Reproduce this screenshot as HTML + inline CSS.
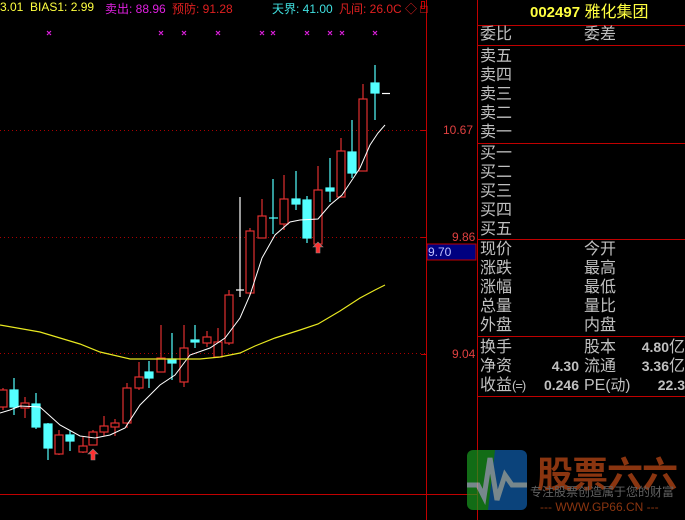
<!DOCTYPE html>
<html><head><meta charset="utf-8"><style>
body{margin:0;background:#000;width:685px;height:520px;overflow:hidden;position:relative;font-family:"Liberation Sans","Noto Sans CJK SC",sans-serif}
.t{position:absolute;white-space:nowrap;font-size:12px}
.p{position:absolute;color:#c0c0c0;font-size:16px;font-family:"Liberation Sans","WenQuanYi Zen Hei","Noto Sans CJK SC",sans-serif;line-height:19px;white-space:nowrap}
.v{position:absolute;color:#c0c0c0;font-size:14px;font-weight:bold;text-align:right;line-height:19px}
</style></head><body>
<svg width="685" height="520" style="position:absolute;left:0;top:0">
<g stroke="#a00" stroke-dasharray="1,3" stroke-width="1">
<line x1="0" y1="130.5" x2="426" y2="130.5"/><line x1="0" y1="237.5" x2="426" y2="237.5"/><line x1="0" y1="353.5" x2="426" y2="353.5"/></g>
<g stroke="#c00000" stroke-width="1" fill="none">
<line x1="426.5" y1="0" x2="426.5" y2="520"/><line x1="477.5" y1="0" x2="477.5" y2="520"/>
<line x1="0" y1="494.5" x2="426" y2="494.5"/>
<line x1="427" y1="494.5" x2="477" y2="494.5"/>
<line x1="477" y1="25.5" x2="685" y2="25.5"/><line x1="477" y1="45.5" x2="685" y2="45.5"/>
<line x1="477" y1="143.5" x2="685" y2="143.5"/><line x1="477" y1="239.5" x2="685" y2="239.5"/>
<line x1="477" y1="336.5" x2="685" y2="336.5"/><line x1="477" y1="396.5" x2="685" y2="396.5"/>
<line x1="421" y1="130.5" x2="426" y2="130.5"/><line x1="421" y1="237.5" x2="426" y2="237.5"/><line x1="421" y1="354.5" x2="426" y2="354.5"/>
<rect x="421.5" y="1.5" width="3" height="7"/>
</g>
<rect x="427" y="244" width="49" height="16" fill="#000080" stroke="#c00000"/>
<g stroke="#e03030" fill="#000" stroke-width="1.2">
<line x1="3" y1="388" x2="3" y2="410"/><rect x="-1" y="390" width="8" height="17"/>
<line x1="25" y1="397" x2="25" y2="418"/><rect x="21" y="403" width="8" height="5"/>
<line x1="59" y1="430" x2="59" y2="455"/><rect x="55" y="435" width="8" height="19"/>
<line x1="83" y1="437" x2="83" y2="453"/><rect x="79" y="446" width="8" height="6"/>
<line x1="93" y1="430" x2="93" y2="445"/><rect x="89" y="432" width="8" height="13"/>
<line x1="104" y1="416" x2="104" y2="436"/><rect x="100" y="426" width="8" height="6"/>
<line x1="115" y1="419" x2="115" y2="436"/><rect x="111" y="423" width="8" height="4"/>
<line x1="127" y1="383" x2="127" y2="428"/><rect x="123" y="388" width="8" height="35"/>
<line x1="139" y1="362" x2="139" y2="390"/><rect x="135" y="377" width="8" height="11"/>
<line x1="161" y1="325" x2="161" y2="372"/><rect x="157" y="358" width="8" height="14"/>
<line x1="184" y1="325" x2="184" y2="387"/><rect x="180" y="348" width="8" height="34"/>
<line x1="207" y1="331" x2="207" y2="347"/><rect x="203" y="337" width="8" height="6"/>
<line x1="218" y1="328" x2="218" y2="358"/><rect x="214" y="342" width="8" height="15"/>
<line x1="229" y1="290" x2="229" y2="345"/><rect x="225" y="295" width="8" height="48"/>
<line x1="250" y1="228" x2="250" y2="295"/><rect x="246" y="231" width="8" height="62"/>
<line x1="262" y1="199" x2="262" y2="238"/><rect x="258" y="216" width="8" height="22"/>
<line x1="284" y1="175" x2="284" y2="230"/><rect x="280" y="199" width="8" height="25"/>
<line x1="318" y1="166" x2="318" y2="244"/><rect x="314" y="190" width="8" height="54"/>
<line x1="341" y1="138" x2="341" y2="197"/><rect x="337" y="151" width="8" height="46"/>
<line x1="363" y1="84" x2="363" y2="171"/><rect x="359" y="99" width="8" height="72"/>
</g>
<g stroke="#54ffff" fill="#54ffff" stroke-width="1.2">
<line x1="14" y1="378" x2="14" y2="415"/><rect x="10" y="390" width="8" height="17"/>
<line x1="36" y1="393" x2="36" y2="429"/><rect x="32" y="404" width="8" height="23"/>
<line x1="48" y1="423" x2="48" y2="460"/><rect x="44" y="424" width="8" height="24"/>
<line x1="70" y1="431" x2="70" y2="451"/><rect x="66" y="435" width="8" height="6"/>
<line x1="149" y1="361" x2="149" y2="388"/><rect x="145" y="372" width="8" height="6"/>
<line x1="172" y1="333" x2="172" y2="380"/><rect x="168" y="359" width="8" height="4"/>
<line x1="195" y1="325" x2="195" y2="348"/><rect x="191" y="340" width="8" height="2"/>
<line x1="273" y1="179" x2="273" y2="234"/><line x1="269" y1="218" x2="278" y2="218"/>
<line x1="296" y1="171" x2="296" y2="210"/><rect x="292" y="199" width="8" height="5"/>
<line x1="307" y1="196" x2="307" y2="243"/><rect x="303" y="200" width="8" height="38"/>
<line x1="330" y1="158" x2="330" y2="202"/><rect x="326" y="188" width="8" height="3"/>
<line x1="352" y1="120" x2="352" y2="178"/><rect x="348" y="152" width="8" height="21"/>
<line x1="375" y1="65" x2="375" y2="120"/><rect x="371" y="83" width="8" height="10"/>
</g>
<g stroke="#fff" stroke-width="1.2"><line x1="240" y1="197" x2="240" y2="297"/><line x1="236" y1="290" x2="244" y2="290"/><line x1="382" y1="93.5" x2="390" y2="93.5"/></g>
<polyline fill="none" stroke="#fff" stroke-width="1" points="0,413 10,410 20,406 40,407 60,425 80,436 95,438 110,435 125,428 140,405 160,385 175,375 190,355 210,348 225,338 240,318 250,295 262,258 275,235 290,222 300,220 318,219 330,205 342,195 352,180 360,168 370,145 378,133 385,125"/>
<polyline fill="none" stroke="#e8e820" stroke-width="1.2" points="0,325 40,332 80,344 100,352 130,359 200,359 220,357 240,353 255,346 275,338 300,330 318,324 340,311 360,298 375,290 385,285"/>
<g fill="#ff3030" stroke="#888" stroke-width="0.6">
<path d="M93,449 L88,454 L91,454 L91,460 L95,460 L95,454 L98,454 Z"/>
<path d="M318,242 L313,247 L316,247 L316,253 L320,253 L320,247 L323,247 Z"/></g>
<g stroke="#e020e0" stroke-width="1.2"><path d="M47,31l4,4M51,31l-4,4 M159,31l4,4M163,31l-4,4 M182,31l4,4M186,31l-4,4 M216,31l4,4M220,31l-4,4 M260,31l4,4M264,31l-4,4 M271,31l4,4M275,31l-4,4 M305,31l4,4M309,31l-4,4 M328,31l4,4M332,31l-4,4 M340,31l4,4M344,31l-4,4 M373,31l4,4M377,31l-4,4"/></g>
<defs><clipPath id="lc"><rect x="467" y="450" width="60" height="60" rx="6"/></clipPath></defs>
<g clip-path="url(#lc)" opacity="0.7"><rect x="467" y="450" width="60" height="60" fill="#1a9a20"/><path d="M495,450 L527,450 L527,510 L488,510 Z" fill="#1060b0"/>
<polyline points="467,485 478,485 484,497 490,458 497,500 505,475 512,485 527,485" fill="none" stroke="#aac0c8" stroke-width="5"/></g>
</svg>
<div class="t" style="left:0;top:0;color:#ffff40">3.01&nbsp; BIAS1: 2.99</div>
<div class="t" style="left:105px;top:0;color:#e020e0">卖出: 88.96</div>
<div class="t" style="left:172px;top:0;color:#e02020">预防: 91.28</div>
<div class="t" style="left:272px;top:0;color:#40e0e0">天界: 41.00</div>
<div class="t" style="left:339px;top:0;color:#e02020">凡间: 26.0C ◇ □</div>
<div class="t" style="left:443px;top:123px;color:#e04040">10.67</div>
<div class="t" style="left:452px;top:230px;color:#e04040">9.86</div>
<div class="t" style="left:428px;top:245px;color:#c0c0ff">9.70</div>
<div class="t" style="left:452px;top:347px;color:#e04040">9.04</div>
<div class="p" style="left:530px;top:3px;color:#ffff40;font-size:16px"><b style="font-size:15px">002497</b> 雅化集团</div>
<div class="p" style="left:480px;top:25px">委比</div><div class="p" style="left:584px;top:25px">委差</div>
<div class="p" style="left:480px;top:47px">卖五<br>卖四<br>卖三<br>卖二<br>卖一</div>
<div class="p" style="left:480px;top:144px">买一<br>买二<br>买三<br>买四<br>买五</div>
<div class="p" style="left:480px;top:240px">现价<br>涨跌<br>涨幅<br>总量<br>外盘</div>
<div class="p" style="left:584px;top:240px">今开<br>最高<br>最低<br>量比<br>内盘</div>
<div class="p" style="left:480px;top:338px">换手<br>净资<br>收益<span style="font-size:13px;letter-spacing:-1px">(=)</span></div>
<div class="p" style="left:584px;top:338px">股本<br>流通<br>PE<span style="font-size:15px">(动)</span></div>
<div class="v" style="left:520px;top:357px;width:59px">4.30</div>
<div class="v" style="left:520px;top:376px;width:59px">0.246</div>
<div class="v" style="left:620px;top:338px;width:65px">4.80<span style="font-weight:normal;font-size:16px">亿</span><br>3.36<span style="font-weight:normal;font-size:16px">亿</span><br>22.3</div>
<div class="t" style="left:537px;top:446px;color:#8a3510;font-size:36px;font-weight:bold;letter-spacing:-1px;font-family:'WenQuanYi Zen Hei','Noto Sans CJK SC',sans-serif">股票六六</div>
<div class="t" style="left:530px;top:483px;color:#606060;font-size:12px;font-family:'WenQuanYi Zen Hei','Noto Sans CJK SC',sans-serif">专注股票创造属于您的财富</div>
<div class="t" style="left:540px;top:500px;color:#8a3510;font-size:12px">--- WWW.GP66.CN ---</div>
</body></html>
